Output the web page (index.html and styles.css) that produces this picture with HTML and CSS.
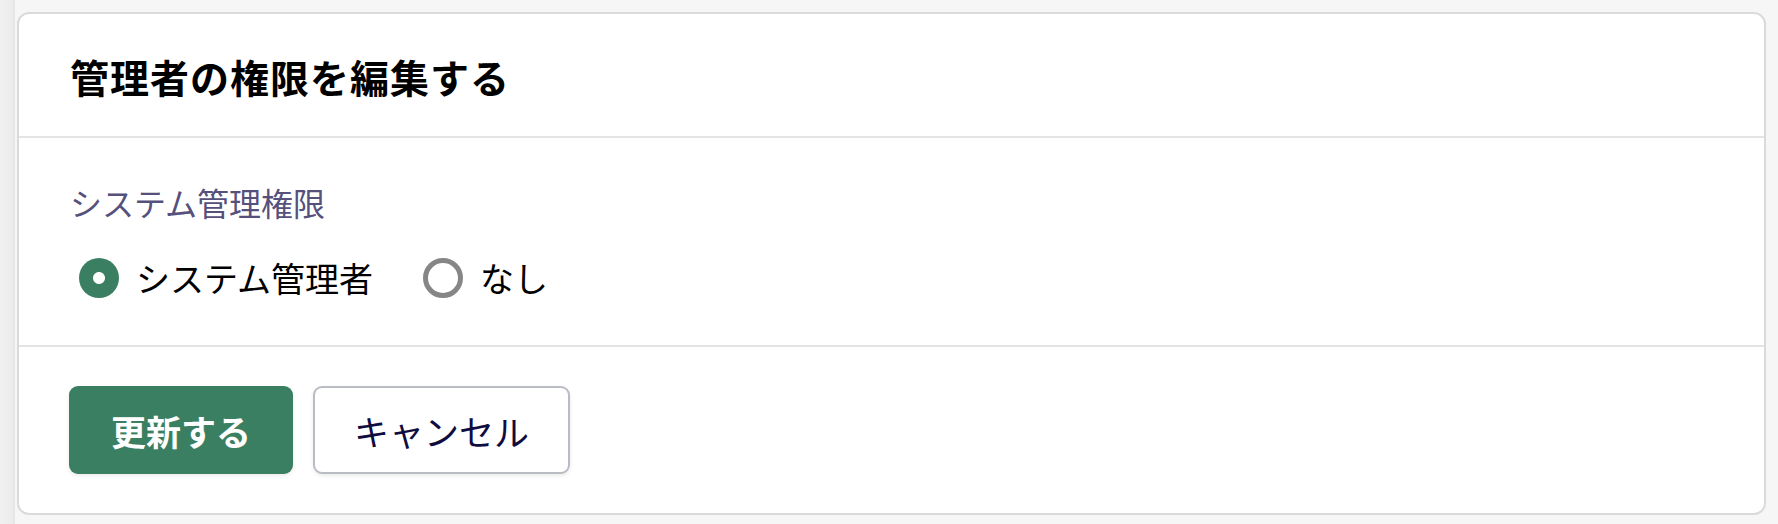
FILE: index.html
```html
<!DOCTYPE html>
<html lang="ja">
<head>
  <meta charset="UTF-8" />
  <meta name="viewport" content="width=device-width, initial-scale=1.0"/>
  <title>管理者の権限を編集する</title>
  <link rel="stylesheet" href="styles.css">
</head>
<body>
  <div class="page">
    <div class="side"></div>
    <div class="card">
      <div class="card-header">
        <h1>管理者の権限を編集する</h1>
      </div>
      <div class="card-body">
        <div class="field-label">システム管理権限</div>
        <div class="radios">
          <label class="radio">
            <input type="radio" name="role" checked>
            <span>システム管理者</span>
          </label>
          <label class="radio">
            <input type="radio" name="role">
            <span>なし</span>
          </label>
        </div>
      </div>
      <div class="card-footer">
        <button class="btn btn-primary">更新する</button>
        <button class="btn btn-cancel">キャンセル</button>
      </div>
    </div>
  </div>
</body>
</html>
```

FILE: styles.css
```css
body {
  margin: 0;
  background: #f6f6f6;
  font-family: "Noto Sans CJK JP", "Noto Sans", sans-serif;
  color: #000;
}
.page {
  display: flex;
  height: 524px;
  overflow: hidden;
}
.side {
  width: 13px;
  flex-shrink: 0;
  background: linear-gradient(90deg, #f1f1f1, #ebebeb);
  border-right: 2px solid #e6e6e6;
}
.card {
  margin: 12px 12px 0 2px;
  width: 1749px;
  height: 503px;
  box-sizing: border-box;
  background: #fff;
  border: 2px solid #dadada;
  border-radius: 12px;
  display: flex;
  flex-direction: column;
}
.card-header {
  height: 124px;
  display: flex;
  align-items: center;
  padding: 2px 51px 0;
  box-sizing: border-box;
  border-bottom: 2px solid #e2e4e6;
}
.card-header h1 {
  margin: 0;
  font-size: 39px;
  font-weight: 700;
  line-height: 1;
  letter-spacing: 1px;
}
.card-body {
  height: 209px;
  box-sizing: border-box;
  padding: 45px 51px 0;
  border-bottom: 2px solid #e2e4e6;
}
.field-label {
  font-size: 32px;
  line-height: 38px;
  color: #55507c;
}
.radios {
  display: flex;
  gap: 50px;
  margin-top: 37px;
  padding-left: 9px;
}
.radio {
  display: flex;
  align-items: center;
  gap: 17px;
  font-size: 34px;
  line-height: 40px;
}
.radio input {
  appearance: none;
  -webkit-appearance: none;
  margin: 0;
  width: 40px;
  height: 40px;
  border-radius: 50%;
  border: 5px solid #868686;
  box-sizing: border-box;
  background: #fff;
}
.radio input:checked {
  border: none;
  background: radial-gradient(circle, #fff 5.5px, #3a7f62 6.5px);
}
.card-footer {
  flex: 1;
  display: flex;
  align-items: center;
  gap: 20px;
  padding: 0 50px;
}
.btn {
  height: 88px;
  border-radius: 9px;
  font-family: inherit;
  font-size: 35px;
  cursor: pointer;
  box-shadow: 0 2px 4px rgba(0,0,0,0.08);
}
.btn-primary {
  width: 224px;
  background: #3a7f62;
  color: #fff;
  border: none;
  font-weight: 700;
}
.btn-cancel {
  width: 257px;
  background: #fff;
  color: #0f0c3f;
  border: 2px solid #b9bdc3;
}
```
